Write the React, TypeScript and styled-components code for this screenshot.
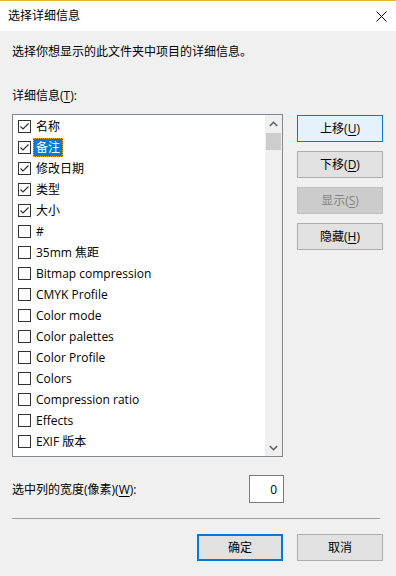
import React from "react";
import styled, { createGlobalStyle, css } from "styled-components";

const Global = createGlobalStyle`
  html, body { margin: 0; padding: 0; }
  body {
    width: 396px;
    height: 576px;
    overflow: hidden;
    background: #f0f0f0;
    font-family: "Open Sans", "Noto Sans CJK SC", sans-serif;
    font-size: 12px;
    color: #000;
  }
`;

const Dialog = styled.div`
  width: 396px;
  height: 576px;
  display: flex;
  flex-direction: column;
  background: #f0f0f0;
`;

const TitleBar = styled.div`
  height: 30px;
  border-top: 1px solid #e5b52a;
  background: #ffffff;
  display: flex;
  align-items: center;
  justify-content: space-between;
  padding-left: 8px;
`;

const Title = styled.span`
  font-size: 12px;
  line-height: 16px;
`;

const CloseBtn = styled.div`
  width: 30px;
  height: 30px;
  display: flex;
  align-items: center;
  justify-content: center;
`;

const Body = styled.div`
  flex: 1;
  display: flex;
  flex-direction: column;
  padding: 13px 13px 0 12px;
`;

const Text = styled.div<{ $mt?: number }>`
  line-height: 16px;
  margin-top: ${(p) => p.$mt ?? 0}px;
`;

const MainRow = styled.div`
  display: flex;
  margin-top: 10px;
  align-items: flex-start;
`;

const ListBox = styled.div`
  width: 271px;
  height: 343px;
  box-sizing: border-box;
  border: 1px solid #828790;
  background: #fff;
  display: flex;
`;

const Items = styled.div`
  flex: 1;
  padding-top: 1px;
  display: flex;
  flex-direction: column;
`;

const Row = styled.div`
  height: 21px;
  display: flex;
  align-items: center;
  padding-left: 5px;
`;

const Box = styled.div`
  width: 13px;
  height: 13px;
  box-sizing: border-box;
  border: 1px solid #333;
  background: #fff;
  display: flex;
  align-items: center;
  justify-content: center;
  flex-shrink: 0;
`;

const Label = styled.span<{ $sel?: boolean }>`
  margin-left: 2px;
  padding: 0 2px;
  line-height: 17px;
  border: 1px solid transparent;
  white-space: nowrap;
  ${(p) =>
    p.$sel &&
    css`
      background: #0078d7;
      color: #fff;
      border: 1px dotted #f5a623;
    `}
`;

const ScrollBar = styled.div`
  width: 17px;
  background: #f0f0f0;
  display: flex;
  flex-direction: column;
`;

const Arrow = styled.div`
  height: 17px;
  display: flex;
  align-items: center;
  justify-content: center;
`;

const Thumb = styled.div`
  height: 17px;
  margin: 1px 1px 0 1px;
  background: #cdcdcd;
`;

const Track = styled.div`
  flex: 1;
`;

const SideButtons = styled.div`
  display: flex;
  flex-direction: column;
  gap: 9px;
  margin-left: 14px;
  margin-top: 1px;
`;

const Button = styled.div<{ $variant?: "default" | "focus" | "disabled" | "primary" }>`
  width: 86px;
  height: 27px;
  box-sizing: border-box;
  display: flex;
  align-items: center;
  justify-content: center;
  line-height: 16px;
  border: 1px solid #adadad;
  background: #e1e1e1;
  color: #000;
  ${(p) =>
    p.$variant === "focus" &&
    css`
      background: #e5f1fb;
      border-color: #0078d7;
    `}
  ${(p) =>
    p.$variant === "disabled" &&
    css`
      background: #cccccc;
      border-color: #bfbfbf;
      color: #838383;
    `}
  ${(p) =>
    p.$variant === "primary" &&
    css`
      border: 2px solid #0078d7;
    `}
`;

const U = styled.span`
  text-decoration: underline;
  text-underline-offset: 2px;
`;

const WidthRow = styled.div`
  display: flex;
  align-items: center;
  justify-content: space-between;
  margin-top: 18px;
  width: 272px;
`;

const NumInput = styled.div`
  width: 35px;
  height: 28px;
  box-sizing: border-box;
  border: 1px solid #7a7a7a;
  background: #fff;
  display: flex;
  align-items: center;
  justify-content: flex-end;
  padding-right: 6px;
`;

const Separator = styled.div`
  height: 1px;
  background: #a0a0a0;
  width: 368px;
  margin-top: 15px;
`;

const Footer = styled.div`
  display: flex;
  justify-content: flex-end;
  gap: 14px;
  margin-top: 15px;
`;

const Check = () => (
  <svg width="11" height="11" viewBox="0 0 11 11">
    <polyline points="1.5,5.5 4,8 9.5,2.5" fill="none" stroke="#333" strokeWidth="1.2" />
  </svg>
);

const items: { name: string; checked: boolean; selected?: boolean }[] = [
  { name: "名称", checked: true },
  { name: "备注", checked: true, selected: true },
  { name: "修改日期", checked: true },
  { name: "类型", checked: true },
  { name: "大小", checked: true },
  { name: "#", checked: false },
  { name: "35mm 焦距", checked: false },
  { name: "Bitmap compression", checked: false },
  { name: "CMYK Profile", checked: false },
  { name: "Color mode", checked: false },
  { name: "Color palettes", checked: false },
  { name: "Color Profile", checked: false },
  { name: "Colors", checked: false },
  { name: "Compression ratio", checked: false },
  { name: "Effects", checked: false },
  { name: "EXIF 版本", checked: false },
];

export default function App() {
  return (
    <Dialog>
      <Global />
      <TitleBar>
        <Title>选择详细信息</Title>
        <CloseBtn>
          <svg width="11" height="11" viewBox="0 0 11 11">
            <path d="M0.5 0.5 L10.5 10.5 M10.5 0.5 L0.5 10.5" stroke="#000" strokeWidth="1" />
          </svg>
        </CloseBtn>
      </TitleBar>
      <Body>
        <Text>选择你想显示的此文件夹中项目的详细信息。</Text>
        <Text $mt={28}>
          详细信息(<U>T</U>):
        </Text>
        <MainRow>
          <ListBox>
            <Items>
              {items.map((it) => (
                <Row key={it.name}>
                  <Box>{it.checked && <Check />}</Box>
                  <Label $sel={it.selected}>{it.name}</Label>
                </Row>
              ))}
            </Items>
            <ScrollBar>
              <Arrow>
                <svg width="9" height="6" viewBox="0 0 9 6">
                  <polyline points="0.8,5 4.5,1.3 8.2,5" fill="none" stroke="#606060" strokeWidth="1.6" />
                </svg>
              </Arrow>
              <Thumb />
              <Track />
              <Arrow>
                <svg width="9" height="6" viewBox="0 0 9 6">
                  <polyline points="0.8,1 4.5,4.7 8.2,1" fill="none" stroke="#606060" strokeWidth="1.6" />
                </svg>
              </Arrow>
            </ScrollBar>
          </ListBox>
          <SideButtons>
            <Button $variant="focus">
              上移(<U>U</U>)
            </Button>
            <Button>
              下移(<U>D</U>)
            </Button>
            <Button $variant="disabled">
              显示(<U>S</U>)
            </Button>
            <Button>
              隐藏(<U>H</U>)
            </Button>
          </SideButtons>
        </MainRow>
        <WidthRow>
          <span>
            选中列的宽度(像素)(<U>W</U>):
          </span>
          <NumInput>0</NumInput>
        </WidthRow>
        <Separator />
        <Footer>
          <Button $variant="primary">确定</Button>
          <Button>取消</Button>
        </Footer>
      </Body>
    </Dialog>
  );
}
